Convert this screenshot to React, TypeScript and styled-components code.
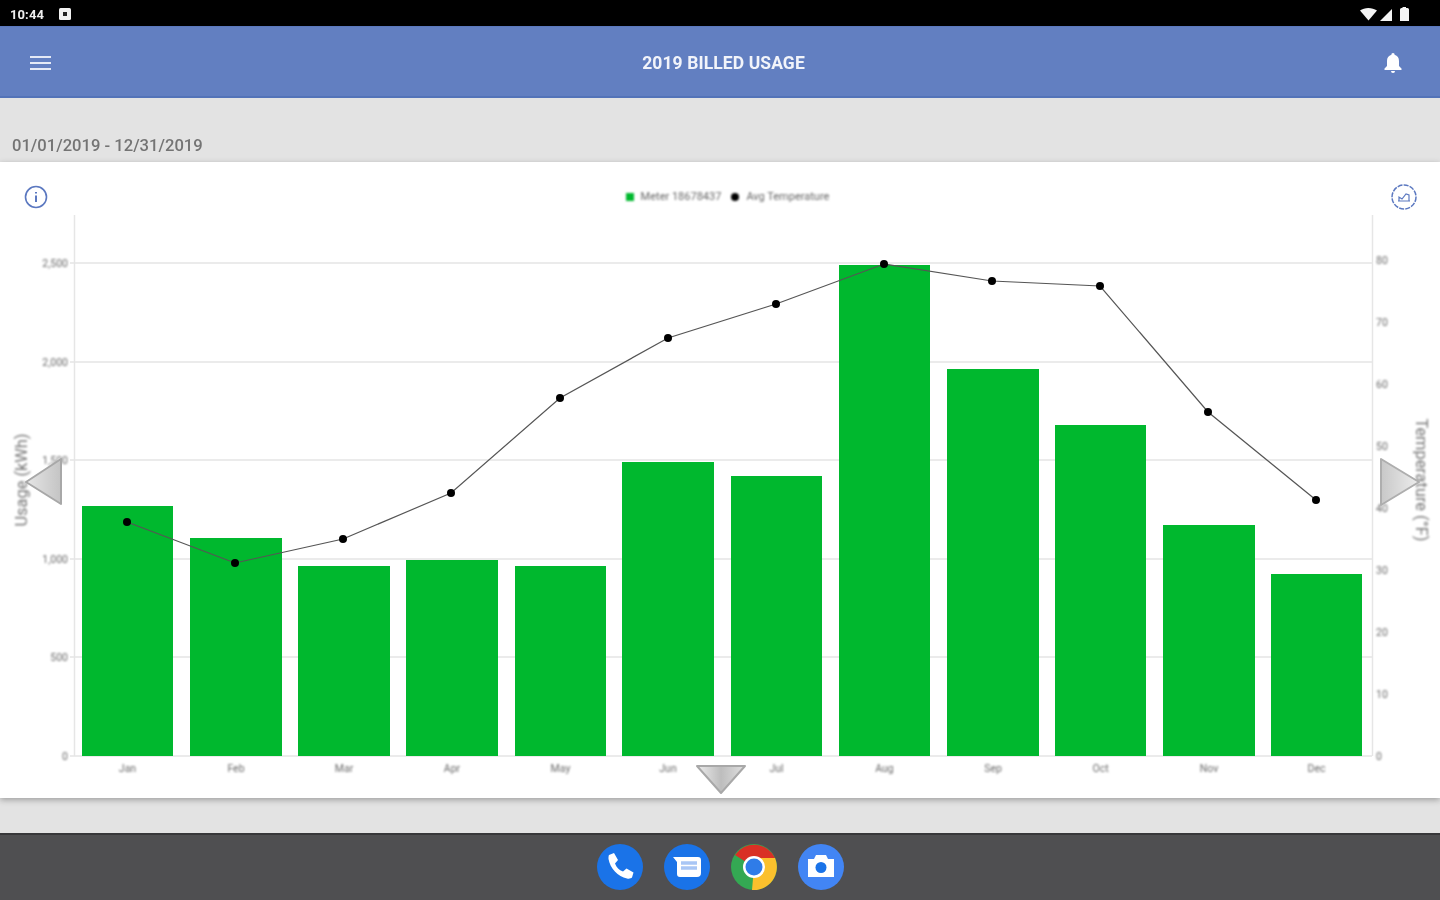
import React from "react";
import styled, { createGlobalStyle } from "styled-components";

const Global = createGlobalStyle`
  html, body { margin: 0; padding: 0; background: #fff; }
  body { font-family: Roboto, "Liberation Sans", sans-serif; overflow: hidden; }
`;

const Screen = styled.div`
  width: 1440px;
  height: 900px;
  display: flex;
  flex-direction: column;
  position: relative;
  overflow: hidden;
  filter: blur(0.6px);
  background: #e3e3e3;
`;

const StatusBar = styled.div`
  height: 26px;
  flex: none;
  box-sizing: border-box;
  background: #000;
  display: flex;
  align-items: center;
  padding: 2px 30px 0 10px;
  color: #eee;
`;
const Clock = styled.span`
  font-size: 13px;
  font-weight: 700;
  width: 49px;
  letter-spacing: 0.1px;
  filter: blur(0.5px);
`;
const StatusRight = styled.div`
  margin-left: auto;
  display: flex;
  align-items: center;
`;

const AppBar = styled.header`
  height: 72px;
  flex: none;
  box-sizing: border-box;
  background: #627fc1;
  border-top: 1px solid #5a78bd;
  border-bottom: 2px solid #5373b8;
  display: flex;
  align-items: center;
  padding: 2px 37px 0 30px;
  color: #fff;
`;
const Title = styled.h1`
  flex: 1;
  margin: 0;
  padding-left: 12px;
  text-align: center;
  font-size: 17.5px;
  font-weight: 700;
  color: #f2f4fa;
  letter-spacing: 0.1px;
  filter: blur(0.4px);
`;

const DateBand = styled.div`
  height: 64px;
  flex: none;
  box-sizing: border-box;
  background: #e3e3e3;
  display: flex;
  align-items: flex-end;
  padding: 0 0 7px 12px;
  font-size: 16.6px;
  font-weight: 500;
  color: #747474;
`;
const DateText = styled.span`
  filter: blur(0.5px);
`;

const Card = styled.main`
  height: 636px;
  flex: none;
  background: #fff;
  display: flex;
  flex-direction: column;
  position: relative;
  box-shadow: 0 2px 6px rgba(0, 0, 0, 0.3);
  z-index: 1;
`;
const CardTop = styled.div`
  height: 53px;
  flex: none;
  padding: 16px 22px 0 24px;
  display: flex;
  align-items: center;
  justify-content: space-between;
  box-sizing: border-box;
`;
const Legend = styled.div`
  display: flex;
  align-items: center;
  font-size: 11px;
  color: #666;
  margin-left: 17px;
  filter: blur(1px);
`;
const Swatch = styled.i<{ $round?: boolean; $color: string }>`
  width: 8px;
  height: 8px;
  display: block;
  margin-right: 7px;
  background: ${(p) => p.$color};
  border-radius: ${(p) => (p.$round ? "50%" : "0")};
`;
const LegendLabel = styled.span`
  margin-right: 10px;
`;
const ChartSvg = styled.svg`
  display: block;
  width: 1440px;
  height: 583px;
`;
const SoftLabels = styled.g`
  filter: blur(0.8px);
`;
const TickText = styled.text`
  font-family: Roboto, "Liberation Sans", sans-serif;
  font-size: 10.5px;
  fill: #6a6a6a;
`;
const AxisTitle = styled.text`
  font-family: Roboto, "Liberation Sans", sans-serif;
  font-size: 16.4px;
  fill: #777;
  text-anchor: middle;
`;

const Arrow = styled.svg<{ $left: number; $top: number }>`
  position: absolute;
  left: ${(p) => p.$left}px;
  top: ${(p) => p.$top}px;
  overflow: visible;
`;

const Gutter = styled.div`
  height: 35px;
  flex: none;
  background: #e3e3e3;
`;
const Dock = styled.nav`
  flex: 1;
  background: #4f4f51;
  border-top: 2px solid #38383a;
  display: flex;
  align-items: center;
  justify-content: center;
  gap: 21px;
  padding-bottom: 1px;
`;
const DockIcon = styled.svg`
  width: 46px;
  height: 46px;
  display: block;
`;

const months = ["Jan", "Feb", "Mar", "Apr", "May", "Jun", "Jul", "Aug", "Sep", "Oct", "Nov", "Dec"];
const bars = [
  [82, 173, 506], [190, 282, 538], [298, 390, 566], [406, 498, 560], [515, 606, 566], [622, 714, 462],
  [731, 822, 476], [839, 930, 265], [947, 1039, 369], [1055, 1146, 425], [1163, 1255, 525], [1271, 1362, 574],
];
const line = [
  [127, 522], [235, 563], [343, 539], [451, 493], [560, 398], [668, 338],
  [776, 304], [884, 264], [992, 281], [1100, 286], [1208, 412], [1316, 500],
];
const grid = [[263, "2,500"], [362, "2,000"], [460, "1,500"], [559, "1,000"], [657, "500"], [756, "0"]] as const;
const right = [[260, "80"], [322, "70"], [384, "60"], [446, "50"], [508, "40"], [570, "30"], [632, "20"], [694, "10"], [756, "0"]] as const;

export default function App() {
  return (
    <Screen>
      <Global />
      <StatusBar>
        <Clock>10:44</Clock>
        <svg width="12" height="12" viewBox="0 0 12 12">
          <rect width="12" height="12" rx="1.5" fill="#f2f2f2" />
          <rect x="4" y="4" width="4" height="4" fill="#222" />
        </svg>
        <StatusRight>
          <svg width="50" height="16" viewBox="0 0 50 16" fill="#f4f4f4">
            <path d="M0 4.5C4.5 1 12 1 17 4.5L8.5 14.5Z" />
            <path d="M32 3V15H20Z" />
            <path d="M40 3.5Q40 2 41.5 2H42.5V1H46V2H47.5Q49 2 49 3.5V15H40Z" />
          </svg>
        </StatusRight>
      </StatusBar>

      <AppBar>
        <svg width="22" height="18" viewBox="0 0 22 18" fill="#e4e9f6">
          <rect y="2" width="21" height="2" />
          <rect y="8" width="21" height="2" />
          <rect y="14" width="21" height="2" />
        </svg>
        <Title>2019 BILLED USAGE</Title>
        <svg width="20" height="22" viewBox="0 0 20 22" fill="#fff">
          <path d="M10 1a1.6 1.6 0 0 1 1.6 1.8C14.5 3.6 16 6 16 9v5l2.5 2.6V18h-17v-1.4L4 14V9c0-3 1.500-5.400 4.400-6.200A1.600 1.600 0 0 1 10 1Z" />
          <path d="M8 19h4a2 2 0 0 1-4 0Z" />
        </svg>
      </AppBar>

      <DateBand>
        <DateText>01/01/2019 - 12/31/2019</DateText>
      </DateBand>

      <Card>
        <CardTop>
          <svg width="24" height="24" viewBox="0 0 24 24" fill="none" stroke="#5b78c0" strokeWidth="1.6">
            <circle cx="12" cy="12" r="10.500" />
            <path d="M12 10.500V17M12 7V8.500" strokeWidth="2" />
          </svg>
          <Legend>
            <Swatch $color="#00b82e" />
            <LegendLabel>Meter 18678437</LegendLabel>
            <Swatch $round $color="#000" />
            <span>Avg Temperature</span>
          </Legend>
          <svg width="28" height="28" viewBox="0 0 28 28" fill="none" stroke="#5b78c0" strokeWidth="1.500">
            <circle cx="14" cy="14" r="12" strokeDasharray="5 1.200" />
            <path d="M8 18H20M9 18V14L12 16L16 11L19 12V18" strokeWidth="1.200" />
          </svg>
        </CardTop>
        <ChartSvg viewBox="0 215 1440 583">
          <path d="M74.500 215V756M1372.500 215V756" stroke="#e6e6e6" strokeWidth="1.500" fill="none" />
          {grid.map(([y]) => (
            <line key={y} x1="70" x2="1372" y1={y} y2={y} stroke="#e4e4e4" strokeWidth="1.500" />
          ))}
          {bars.map(([a, b, top], i) => (
            <rect key={months[i]} x={a} y={top} width={b - a} height={756 - top} fill="#00b82e" />
          ))}
          <SoftLabels>
            {grid.map(([y, label]) => (
              <TickText key={label} x="68" y={y + 3.5} textAnchor="end">{label}</TickText>
            ))}
            {right.map(([y, label]) => (
              <TickText key={label} x="1376" y={y + 3.5}>{label}</TickText>
            ))}
            {bars.map(([a, b], i) => (
              <TickText key={months[i]} x={(a + b) / 2} y="772" textAnchor="middle">{months[i]}</TickText>
            ))}
            <AxisTitle transform="translate(27 480) rotate(-90)">Usage (kWh)</AxisTitle>
            <AxisTitle transform="translate(1416 480) rotate(90)">Temperature (°F)</AxisTitle>
          </SoftLabels>
          <polyline points={line.map((p) => p.join(",")).join(" ")} fill="none" stroke="#555" strokeWidth="1.200" />
          {line.map(([x, y]) => (
            <circle key={x} cx={x} cy={y} r="4" fill="#000" />
          ))}
        </ChartSvg>

        <Arrow $left={24} $top={295} width="40" height="50" viewBox="0 0 40 50">
          <defs>
            <linearGradient id="ga" x1="0" x2="1" y1="0" y2="0">
              <stop offset="0" stopColor="#e6e6e6" />
              <stop offset="1" stopColor="#c4c4c4" />
            </linearGradient>
          </defs>
          <path d="M37 2V47L2 25Z" fill="url(#ga)" stroke="#a8a8a8" strokeWidth="2" strokeLinejoin="round" />
        </Arrow>
        <Arrow $left={1379} $top={295} width="42" height="50" viewBox="0 0 42 50">
          <defs>
            <linearGradient id="gb" x1="0" x2="1" y1="0" y2="0">
              <stop offset="0" stopColor="#c8c8c8" />
              <stop offset="1" stopColor="#ededed" />
            </linearGradient>
          </defs>
          <path d="M2 2V48L40 25Z" fill="url(#gb)" stroke="#aeaeae" strokeWidth="2" strokeLinejoin="round" />
        </Arrow>
        <Arrow $left={695} $top={602} width="52" height="30" viewBox="0 0 52 30">
          <defs>
            <linearGradient id="gc" x1="0" x2="1" y1="0" y2="0">
              <stop offset="0" stopColor="#ececec" />
              <stop offset="0.5" stopColor="#bdbdbd" />
              <stop offset="1" stopColor="#e0e0e0" />
            </linearGradient>
          </defs>
          <path d="M2 2H50L26 29Z" fill="url(#gc)" stroke="#a8a8a8" strokeWidth="2" strokeLinejoin="round" />
        </Arrow>
      </Card>

      <Gutter />

      <Dock>
        <DockIcon viewBox="0 0 46 46">
          <circle cx="23" cy="23" r="23" fill="#1a73e8" />
          <path d="M12 11l5-2 4 7-3 3.500c1.500 4 4 6.500 8 8l3.500-3 7 4-1.500 5c-1 1-3 1.500-5 1C21 33 13 24 11.500 15c0-2 0-3 .5-4Z" fill="#fff" />
        </DockIcon>
        <DockIcon viewBox="0 0 46 46">
          <circle cx="23" cy="23" r="23" fill="#1a73e8" />
          <path d="M9 13H34Q37 13 37 16V29Q37 33 33 33H16Q13 33 13 30V18Z" fill="#fff" />
          <path d="M17 19H33M17 24H33" stroke="#a9c6f5" strokeWidth="3.500" />
        </DockIcon>
        <DockIcon viewBox="0 0 46 46">
          <circle cx="23" cy="23" r="23" fill="#34a853" />
          <path d="M23 23L4 11A23 23 0 0 1 44 14H23Z" fill="#d93025" />
          <path d="M23 14H44A23 23 0 0 1 21 46L23 23Z" fill="#fbc02d" />
          <circle cx="23" cy="23" r="11" fill="#fff" />
          <circle cx="23" cy="23" r="8.500" fill="#2f7ce8" />
        </DockIcon>
        <DockIcon viewBox="0 0 46 46">
          <circle cx="23" cy="23" r="23" fill="#4285f4" />
          <path d="M10 15H16L18 11H28L30 15H36V33H10Z" fill="#fff" />
          <circle cx="23" cy="23.500" r="5.500" fill="#1a73e8" />
        </DockIcon>
      </Dock>
    </Screen>
  );
}
